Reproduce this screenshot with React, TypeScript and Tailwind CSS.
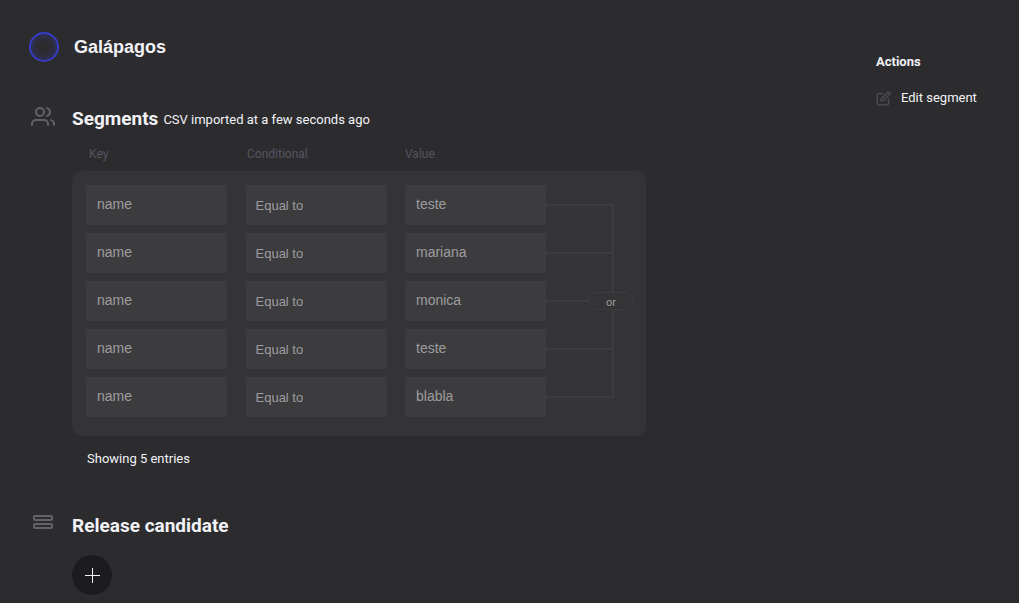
const rows = ["teste", "mariana", "monica", "teste", "blabla"];

const field = "h-10 w-[141px] bg-[#3c3c3e] text-[#9c9c9e] outline-none";

function UsersIcon() {
  return (
    <svg aria-hidden="true" viewBox="0 0 24 24" className="size-6" fill="none" stroke="#636366" strokeWidth="2" strokeLinecap="round" strokeLinejoin="round">
      <path d="M17 21v-1a4 4 0 0 0-4-4H5a4 4 0 0 0-4 4v1" />
      <circle cx="9" cy="8" r="4" />
      <path d="M23 21v-1a4 4 0 0 0-3-3.87" />
      <path d="M16 4.13a4 4 0 0 1 0 7.75" />
    </svg>
  );
}

function RowsIcon() {
  return (
    <svg aria-hidden="true" viewBox="0 0 20 14" className="h-[14px] w-5" fill="none" stroke="#636366" strokeWidth="2">
      <rect x="1" y="1" width="18" height="4" rx="1" />
      <rect x="1" y="9" width="18" height="4" rx="1" />
    </svg>
  );
}

function EditIcon() {
  return (
    <svg aria-hidden="true" viewBox="0 0 24 24" className="size-[15px]" fill="none" stroke="#4f4d5a" strokeWidth="2" strokeLinecap="round" strokeLinejoin="round">
      <path d="M11 4H4a2 2 0 0 0-2 2v14a2 2 0 0 0 2 2h14a2 2 0 0 0 2-2v-7" />
      <path d="M18.5 2.5a2.12 2.12 0 0 1 3 3L12 15l-4 1 1-4 9.5-9.5z" />
    </svg>
  );
}

function PlusIcon() {
  return (
    <svg aria-hidden="true" viewBox="0 0 16 16" className="size-4" fill="none" stroke="currentColor" strokeWidth="1">
      <path d="M1 8.5H16M8.5 1V16" />
    </svg>
  );
}

function Connector() {
  return (
    <div className="relative mt-[19px] mb-[19px] h-[194px] w-[88px] shrink-0">
      <svg aria-hidden="true" viewBox="0 0 88 194" className="h-[194px] w-[88px]" fill="none" stroke="#3c3c3e" strokeWidth="2">
        <path d="M0 1H68M0 49H68M0 97H42M0 145H68M0 193H68M67 1V88M67 106V194" />
      </svg>
      <span className="absolute top-[88px] left-[42px] flex h-[18px] w-[46px] items-center justify-center rounded-full border border-[#3c3c3e] pt-1 text-[11px] text-[#9c9c9e]">
        or
      </span>
    </div>
  );
}

export default function App() {
  return (
    <div className="flex min-h-screen justify-between bg-[#2c2c2e] pt-8 font-['Roboto',sans-serif] text-[13px] text-[#f2f2f7]">
      <main className="flex flex-col pl-7">
        <header className="flex h-[30px] items-center gap-[15px] pl-px">
          <span className="size-[30px] rounded-full border-2 border-[#373cc4] shadow-[inset_0_0_8px_rgba(55,60,196,0.5)]" />
          <h1 className="font-['Liberation_Sans',sans-serif] text-lg leading-[30px] font-bold">Galápagos</h1>
        </header>

        <section className="mt-[42px] flex">
          <div className="w-11 shrink-0 pl-[3px]">
            <UsersIcon />
          </div>
          <div>
            <div className="flex items-center gap-[5px]">
              <h2 className="text-[19px] leading-[30px] font-bold">Segments</h2>
              <p className="pt-0.5 leading-5">CSV imported at a few seconds ago</p>
            </div>
            <div className="mt-[10px] mb-[7px] flex gap-[17px] pl-[17px] text-xs leading-5 text-[#565460]">
              <span className="w-[141px]">Key</span>
              <span className="w-[141px]">Conditional</span>
              <span className="w-[141px]">Value</span>
            </div>
            <div className="flex rounded-[10px] bg-[#343436] pt-[14px] pr-3 pb-[19px] pl-[14px]">
              <div className="flex w-[460px] flex-col gap-2">
                {rows.map((value, i) => (
                  <div key={i} className="flex justify-between">
                    <input aria-label={`Key ${i + 1}`} defaultValue="name" readOnly className={`${field} px-[11px] pb-0.5 font-['Liberation_Sans',sans-serif] text-sm`} />
                    <select aria-label={`Conditional ${i + 1}`} defaultValue="eq" className={`${field} appearance-none px-[10px] pt-0.5 font-['Liberation_Sans',sans-serif] text-[13px]`}>
                      <option value="eq">Equal to</option>
                    </select>
                    <input aria-label={`Value ${i + 1}`} defaultValue={value} readOnly className={`${field} px-[11px] pb-0.5 font-['Liberation_Sans',sans-serif] text-sm`} />
                  </div>
                ))}
              </div>
              <Connector />
            </div>
            <p className="mt-[13px] pl-[15px] leading-5">Showing 5 entries</p>
          </div>
        </section>

        <section className="mt-[42px] flex">
          <div className="w-11 shrink-0 pt-1 pl-[5px]">
            <RowsIcon />
          </div>
          <div>
            <h2 className="text-[19px] leading-[30px] font-bold">Release candidate</h2>
            <button type="button" aria-label="Add release candidate" className="mt-[14px] flex size-10 items-center justify-center rounded-full bg-[#1c1c1e] text-[#f2f2f7]">
              <PlusIcon />
            </button>
          </div>
        </section>
      </main>

      <aside className="w-[143px] shrink-0 pt-5">
        <h3 className="leading-5 font-bold">Actions</h3>
        <button type="button" className="mt-4 flex items-center gap-[10px] leading-5">
          <EditIcon />
          Edit segment
        </button>
      </aside>
    </div>
  );
}
